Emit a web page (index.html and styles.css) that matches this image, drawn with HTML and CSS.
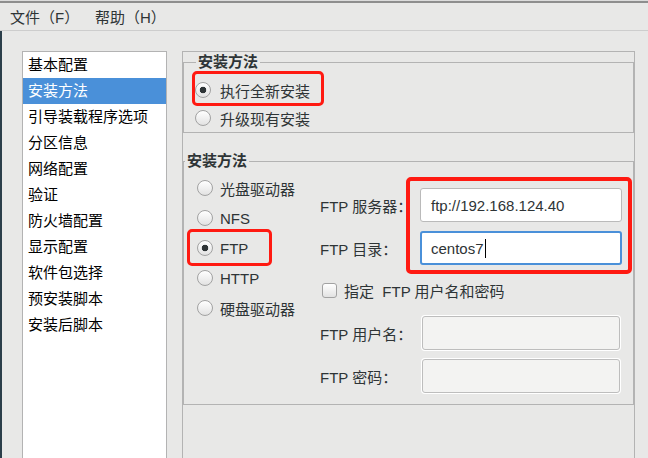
FILE: index.html
```html
<!DOCTYPE html>
<html lang="zh-CN">
<head>
<meta charset="utf-8">
<title>Kickstart 配置</title>
<link rel="stylesheet" href="styles.css">
</head>
<body>
<div class="page">
  <div class="topbar"></div>
  <nav class="menubar">
    <span class="menu-item menu-file">文件（F）</span>
    <span class="menu-item">帮助（H）</span>
  </nav>
  <div class="main">
    <ul class="nav-list">
      <li>基本配置</li>
      <li class="active">安装方法</li>
      <li>引导装载程序选项</li>
      <li>分区信息</li>
      <li>网络配置</li>
      <li>验证</li>
      <li>防火墙配置</li>
      <li>显示配置</li>
      <li>软件包选择</li>
      <li>预安装脚本</li>
      <li>安装后脚本</li>
    </ul>
    <section class="panel">
      <fieldset class="group group-method">
        <legend>安装方法</legend>
        <div class="radio-row"><span class="radio checked"></span><span>执行全新安装</span></div>
        <div class="radio-row"><span class="radio"></span><span>升级现有安装</span></div>
      </fieldset>
      <fieldset class="group group-source">
        <legend>安装方法</legend>
        <div class="source-body">
          <div class="source-list">
            <div class="radio-row"><span class="radio"></span><span>光盘驱动器</span></div>
            <div class="radio-row"><span class="radio"></span><span>NFS</span></div>
            <div class="radio-row"><span class="radio checked"></span><span>FTP</span></div>
            <div class="radio-row"><span class="radio"></span><span>HTTP</span></div>
            <div class="radio-row"><span class="radio"></span><span>硬盘驱动器</span></div>
          </div>
          <div class="ftp-form">
            <span class="field-label">FTP 服务器：</span>
            <div class="entry">ftp://192.168.124.40</div>
            <span class="field-label">FTP 目录：</span>
            <div class="entry focused">centos7<span class="caret"></span></div>
            <div class="check-row"><span class="checkbox"></span><span>指定&nbsp; FTP 用户名和密码</span></div>
            <span class="field-label">FTP 用户名：</span>
            <div class="entry disabled"></div>
            <span class="field-label">FTP 密码：</span>
            <div class="entry disabled"></div>
          </div>
        </div>
      </fieldset>
    </section>
  </div>
  <div class="mark mark-new"></div>
  <div class="mark mark-ftp"></div>
  <div class="mark mark-fields"></div>
</div>
</body>
</html>
```

FILE: styles.css
```css
* { box-sizing: border-box; }

html, body {
  margin: 0;
  padding: 0;
}

body {
  width: 648px;
  height: 458px;
  overflow: hidden;
  background: #e8e8e7;
  font-family: "Liberation Sans", "Noto Sans CJK SC", sans-serif;
  font-size: 15px;
  color: #2e3436;
}

.page {
  position: relative;
  width: 648px;
  height: 458px;
}

.topbar {
  height: 3px;
  background: #dcdcdc;
  border-bottom: 2px solid #8e8e8e;
}

.menubar {
  display: flex;
  align-items: center;
  height: 28px;
  padding-left: 10px;
  border-bottom: 1px solid #cdcdcd;
  color: #2e3436;
}

.menu-file {
  width: 85px;
}

.main {
  display: flex;
  align-items: stretch;
  height: 427px;
  padding: 20px 0 0 20px;
  border-left: 2px solid #2b3e4a;
}

.nav-list {
  width: 145px;
  margin: 0;
  padding: 0;
  list-style: none;
  background: #ffffff;
  border: 1px solid #b3b3b3;
  border-bottom: none;
  color: #000000;
}

.nav-list li {
  height: 26px;
  line-height: 26px;
  padding-left: 5px;
  white-space: nowrap;
}

.nav-list li.active {
  background: #4a90d9;
  color: #ffffff;
}

.panel {
  width: 453px;
  margin-left: 15px;
  border: 1px solid #b3b3b3;
  border-bottom: none;
}

.group {
  margin: 0;
  padding: 0;
  min-width: 0;
  border: 1px solid #b3b3b3;
}

.group legend {
  margin-left: 1px;
  padding: 0 2px;
  font-weight: 700;
  line-height: 20px;
  color: #2e3436;
}

.group-method {
  padding: 4px 0 0 11px;
}

.group-method .radio-row {
  height: 28px;
  gap: 9px;
}

.group-source {
  margin-top: 18px;
  padding: 2px 0 11px 0;
}

.radio-row {
  display: flex;
  align-items: center;
  gap: 7px;
}

.radio {
  width: 16px;
  height: 16px;
  flex: none;
  border-radius: 50%;
  border: 1px solid #a2a2a2;
  background: linear-gradient(#ffffff, #e2e2e2);
}

.radio.checked {
  background:
    radial-gradient(circle, #2e3436 0 3px, transparent 3.6px),
    linear-gradient(#ffffff, #e2e2e2);
}

.source-body {
  display: flex;
}

.source-list {
  width: 136px;
  padding-left: 13px;
}

.source-list .radio-row {
  height: 30px;
}

.ftp-form {
  display: grid;
  grid-template-columns: 100px 202px;
  grid-template-rows: 34px 34px 33px 34px 34px;
  row-gap: 9px;
  margin-top: 15px;
}

.field-label {
  align-self: center;
  white-space: nowrap;
}

.entry {
  display: flex;
  align-items: center;
  padding-left: 10px;
  background: #ffffff;
  border: 1px solid #bababa;
  border-radius: 3px;
  color: #2e3436;
}

.entry.focused {
  border: 2px solid #4a90d9;
  padding-left: 9px;
}

.caret {
  width: 1px;
  height: 19px;
  margin-left: 1px;
  background: #000000;
}

.entry.disabled {
  width: 198px;
  margin-left: 2px;
  background: #f3f3f2;
  border-color: #bdbdbd;
  box-shadow: 0 0 0 1px #ffffff;
}

.check-row {
  grid-column: 1 / -1;
  display: flex;
  align-items: center;
  gap: 7px;
  padding-left: 2px;
}

.checkbox {
  width: 15px;
  height: 15px;
  border: 1px solid #a2a2a2;
  border-radius: 3px;
  background: linear-gradient(#ffffff, #e2e2e2);
}

.mark {
  position: absolute;
  border: 3px solid #ff1a12;
  border-radius: 5px;
}

.mark-new {
  left: 192px;
  top: 71px;
  width: 132px;
  height: 35px;
}

.mark-ftp {
  left: 187px;
  top: 229px;
  width: 85px;
  height: 37px;
}

.mark-fields {
  left: 406px;
  top: 177px;
  width: 226px;
  height: 97px;
  border-width: 4px;
}
```
